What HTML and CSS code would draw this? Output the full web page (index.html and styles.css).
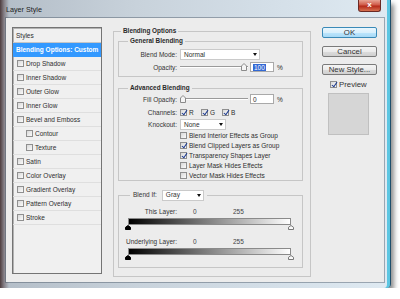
FILE: index.html
```html
<!DOCTYPE html>
<html lang="en">
<head>
    <meta charset="UTF-8">
    <meta name="viewport" content="width=device-width, initial-scale=1.0">
    <title>Layer Style</title>
    <link rel="stylesheet" href="styles.css">
</head>
<body>
    <div class="window">
        <div class="titlebar">
            <span class="title">Layer Style</span>
            <div class="close">x</div>
        </div>
        <div class="client">
            <div class="styles-list">
                <div class="list-head">Styles</div>
                <div class="list-item selected">Blending Options: Custom</div>
                <div class="list-item"><span class="cb"></span>Drop Shadow</div>
                <div class="list-item"><span class="cb"></span>Inner Shadow</div>
                <div class="list-item"><span class="cb"></span>Outer Glow</div>
                <div class="list-item"><span class="cb"></span>Inner Glow</div>
                <div class="list-item"><span class="cb"></span>Bevel and Emboss</div>
                <div class="list-item sub"><span class="cb"></span>Contour</div>
                <div class="list-item sub"><span class="cb"></span>Texture</div>
                <div class="list-item"><span class="cb"></span>Satin</div>
                <div class="list-item"><span class="cb"></span>Color Overlay</div>
                <div class="list-item"><span class="cb"></span>Gradient Overlay</div>
                <div class="list-item"><span class="cb"></span>Pattern Overlay</div>
                <div class="list-item"><span class="cb"></span>Stroke</div>
            </div>

            <fieldset class="group main">
                <legend>Blending Options</legend>

                <fieldset class="group general">
                    <legend>General Blending</legend>
                    <div class="row r-select">
                        <span class="label">Blend Mode:</span>
                        <div class="select mode">Normal<span class="arrow"></span></div>
                    </div>
                    <div class="row r-slider">
                        <span class="label">Opacity:</span>
                        <div class="slider full">
                            <svg class="thumb" width="6" height="8" viewBox="0 0 6 8"><path d="M0.5 7.5V3L3 0.5L5.5 3V7.5Z" fill="#f4f4f4" stroke="#8a8a8a"/></svg>
                        </div>
                        <div class="num"><span class="hl">100</span></div>
                        <span class="pct">%</span>
                    </div>
                </fieldset>

                <fieldset class="group advanced">
                    <legend>Advanced Blending</legend>
                    <div class="row r-fill">
                        <span class="label">Fill Opacity:</span>
                        <div class="slider">
                            <svg class="thumb" width="6" height="8" viewBox="0 0 6 8"><path d="M0.5 7.5V3L3 0.5L5.5 3V7.5Z" fill="#f4f4f4" stroke="#8a8a8a"/></svg>
                        </div>
                        <div class="num">0</div>
                        <span class="pct">%</span>
                    </div>
                    <div class="row r-channels">
                        <span class="label">Channels:</span>
                        <span class="cb on"></span><span class="chan">R</span>
                        <span class="cb on"></span><span class="chan">G</span>
                        <span class="cb on"></span><span class="chan">B</span>
                    </div>
                    <div class="row r-select r-knock">
                        <span class="label">Knockout:</span>
                        <div class="select knock">None<span class="arrow"></span></div>
                    </div>
                    <div class="opt"><span class="cb"></span>Blend Interior Effects as Group</div>
                    <div class="opt"><span class="cb on"></span>Blend Clipped Layers as Group</div>
                    <div class="opt"><span class="cb on"></span>Transparency Shapes Layer</div>
                    <div class="opt"><span class="cb"></span>Layer Mask Hides Effects</div>
                    <div class="opt"><span class="cb"></span>Vector Mask Hides Effects</div>
                </fieldset>

                <fieldset class="group blendif">
                    <legend><span class="bi-legend">Blend If:<span class="select gray">Gray<span class="arrow"></span></span></span></legend>
                    <div class="bi-row">
                        <span class="label">This Layer:</span>
                        <span class="v0">0</span>
                        <span class="v255">255</span>
                    </div>
                    <div class="ramp"></div>
                    <div class="thumbs">
                        <svg width="6" height="5" viewBox="0 0 6 5"><path d="M0.5 4.5V2.3L3 0.5L5.5 2.3V4.5Z" fill="#000" stroke="#000"/></svg>
                        <svg width="6" height="5" viewBox="0 0 6 5"><path d="M0.5 4.5V2.3L3 0.5L5.5 2.3V4.5Z" fill="#fafafa" stroke="#777"/></svg>
                    </div>
                    <div class="bi-row">
                        <span class="label">Underlying Layer:</span>
                        <span class="v0">0</span>
                        <span class="v255">255</span>
                    </div>
                    <div class="ramp"></div>
                    <div class="thumbs">
                        <svg width="6" height="5" viewBox="0 0 6 5"><path d="M0.5 4.5V2.3L3 0.5L5.5 2.3V4.5Z" fill="#000" stroke="#000"/></svg>
                        <svg width="6" height="5" viewBox="0 0 6 5"><path d="M0.5 4.5V2.3L3 0.5L5.5 2.3V4.5Z" fill="#fafafa" stroke="#777"/></svg>
                    </div>
                </fieldset>
            </fieldset>

            <div class="actions">
                <div class="btn default">OK</div>
                <div class="btn cancel">Cancel</div>
                <div class="btn newstyle">New Style...</div>
                <div class="preview"><span class="cb on"></span>Preview</div>
                <div class="swatch"></div>
            </div>
        </div>
    </div>
</body>
</html>
```

FILE: styles.css
```css
* {
    box-sizing: border-box;
}

body {
    margin: 0;
    background: #fff;
    font-family: "Liberation Sans", Arial, sans-serif;
    font-size: 6.5px;
    color: #2e2e2e;
}

.window {
    width: 391px;
    height: 288px;
    display: flex;
    flex-direction: column;
    padding: 0 6px 6px 6px;
    background: linear-gradient(to right, #4d3c3e 0, #857f86 4px, #b4bec8 9px, #c8d2db 35%, #d4dfe8 70%, #dfeaf2 100%);
    border-right: 1px solid #1f4f6c;
    border-radius: 0 0 4px 0;
    box-shadow: inset -3px 0 0 #5cc6e2, 3px 4px 5px rgba(0, 0, 0, 0.45);
}

.titlebar {
    height: 18px;
    display: flex;
    justify-content: space-between;
    align-items: center;
}

.title {
    font-size: 7.2px;
    color: #1c1c1c;
}

.close {
    align-self: flex-start;
    width: 23px;
    height: 12px;
    margin-right: 3px;
    border: 1px solid #6b2a24;
    border-top: none;
    border-radius: 0 0 3px 3px;
    background: linear-gradient(#e8a494 0, #cf5a48 45%, #b52a1a 55%, #d6704f 100%);
    color: #fff;
    font-weight: bold;
    font-size: 8px;
    text-align: center;
    line-height: 10px;
}

.client {
    flex: 1;
    display: flex;
    align-items: flex-start;
    padding: 9px 0 0 6px;
    background: #ececec;
    box-shadow: 0 0 0 1px rgba(70, 85, 100, 0.45);
}

/* styles list */
.styles-list {
    width: 90px;
    height: 247px;
    border: 1px solid #747474;
    background: #f0f0f0;
    box-shadow: inset 1px 1px 0 #b2b2b2;
}

.list-head {
    height: 15px;
    line-height: 15px;
    padding-left: 3px;
    border-bottom: 1px solid #c6c6c6;
}

.list-item {
    height: 14px;
    display: flex;
    align-items: center;
    gap: 2px;
    padding-left: 4px;
    border-bottom: 1px solid #dfdfdf;
}

.list-item.sub {
    padding-left: 13px;
}

.list-item.selected {
    padding-left: 3px;
    background: #3399ff;
    color: #fff;
    font-weight: bold;
    border-bottom-color: #3399ff;
}

.cb {
    position: relative;
    flex: none;
    width: 7px;
    height: 7px;
    border: 1px solid #8f8f8f;
    background: linear-gradient(135deg, #d8d8d8, #fbfbfb);
}

.cb.on::after {
    content: "";
    position: absolute;
    left: 2px;
    top: -1px;
    width: 2px;
    height: 5px;
    border: solid #1d3b8f;
    border-width: 0 1.3px 1.3px 0;
    transform: rotate(35deg);
}

/* group boxes */
.group {
    margin: 0;
    padding: 0;
    border: 1px solid #c6c6c6;
    min-width: 0;
}

.group legend {
    padding: 0 2px;
    line-height: 8px;
    font-weight: bold;
    font-size: 6.4px;
    color: #2a2a2a;
}

.main {
    width: 198px;
    height: 250px;
    margin-left: 11px;
    padding: 2px 7px 0 4px;
}

.main > legend {
    margin-left: 3px;
}

.general legend,
.advanced legend {
    margin-left: 9px;
}

.general {
    padding-bottom: 3px;
}

.advanced {
    margin-top: 7px;
}

.row {
    display: flex;
    align-items: center;
}

.label {
    width: 58px;
    flex: none;
    margin-right: 3px;
    text-align: right;
    color: #333;
}

.r-select {
    margin-top: 4px;
    height: 11px;
}

.r-slider {
    margin-top: 1px;
    height: 12px;
}

.r-fill {
    margin-top: 2px;
    height: 10px;
}

.r-channels {
    margin-top: 2px;
    height: 12px;
}

.r-knock {
    margin-top: 1px;
}

.select {
    display: flex;
    align-items: center;
    justify-content: space-between;
    height: 11px;
    padding: 0 2px 0 3px;
    background: #fff;
    border: 1px solid #cacaca;
    font-weight: normal;
}

.select.mode {
    width: 80px;
}

.select.knock {
    width: 46px;
}

.select.gray {
    width: 42px;
}

.arrow {
    width: 0;
    height: 0;
    border-left: 2.5px solid transparent;
    border-right: 2.5px solid transparent;
    border-top: 3px solid #111;
}

.slider {
    width: 68px;
    height: 10px;
    margin-right: 2px;
    display: flex;
    align-items: center;
    background: linear-gradient(to bottom, transparent 4px, #9a9a9a 4px, #9a9a9a 5px, #fff 5px, #fff 6px, transparent 6px);
}

.slider.full {
    justify-content: flex-end;
    padding-right: 1px;
}

.num {
    width: 24px;
    height: 10px;
    display: flex;
    align-items: center;
    padding-left: 2px;
    background: #fff;
    border: 1px solid #a9a9a9;
}

.hl {
    background: #3369d4;
    color: #fff;
    padding: 0 1px;
}

.pct {
    margin-left: 3px;
}

.r-channels .cb {
    margin-right: 2px;
}

.chan {
    width: 12px;
}

.opt {
    height: 10px;
    margin-left: 61px;
    display: flex;
    align-items: center;
    gap: 2px;
}

.opt:first-of-type {
    margin-top: 1px;
}

/* blend if */
.blendif {
    margin-top: 8px;
    padding-bottom: 6px;
}

.blendif legend {
    margin-left: 11px;
    padding: 0 3px;
    line-height: 12px;
    font-weight: normal;
    font-size: 6.5px;
}

.bi-legend {
    display: inline-flex;
    align-items: center;
    gap: 5px;
    color: #333;
}

.bi-row {
    display: flex;
    align-items: center;
    height: 10px;
    margin-top: 5px;
}

.bi-row .label {
    margin-right: 0;
}

.v0 {
    margin-left: 16px;
    width: 40px;
    color: #444;
}

.v255 {
    color: #444;
}

.ramp {
    width: 163px;
    height: 7px;
    margin: 2px 0 0 9px;
    border: 1px solid #8a8a8a;
    background: linear-gradient(to right, #000 0, #777 45%, #fff 100%);
}

.thumbs {
    width: 169px;
    height: 6px;
    margin-left: 6px;
    display: flex;
    justify-content: space-between;
    align-items: flex-start;
}

/* buttons on the right */
.actions {
    width: 55px;
    margin-left: 11px;
    display: flex;
    flex-direction: column;
    align-items: flex-start;
    font-size: 7.8px;
}

.btn {
    width: 55px;
    height: 11px;
    line-height: 9px;
    text-align: center;
    color: #333;
    border: 1px solid #7a7a7a;
    border-radius: 2px;
    background: linear-gradient(#f4f4f4 0, #ebebeb 50%, #dcdcdc 50%, #d0d0d0 100%);
}

.btn.default {
    border-color: #3a8ab8;
    background: linear-gradient(#eaf6fd 0, #d9f0fc 50%, #bee6fd 50%, #a7d9f5 100%);
}

.btn.cancel {
    margin-top: 8px;
}

.btn.newstyle {
    margin-top: 7px;
}

.preview {
    margin-top: 5px;
    height: 9px;
    padding-left: 8px;
    display: flex;
    align-items: center;
    gap: 2px;
    color: #333;
}

.swatch {
    width: 41px;
    height: 42px;
    margin: 4px 0 0 6px;
    background: #d6d6d6;
    border: 1px solid #c0c0c0;
}
```
